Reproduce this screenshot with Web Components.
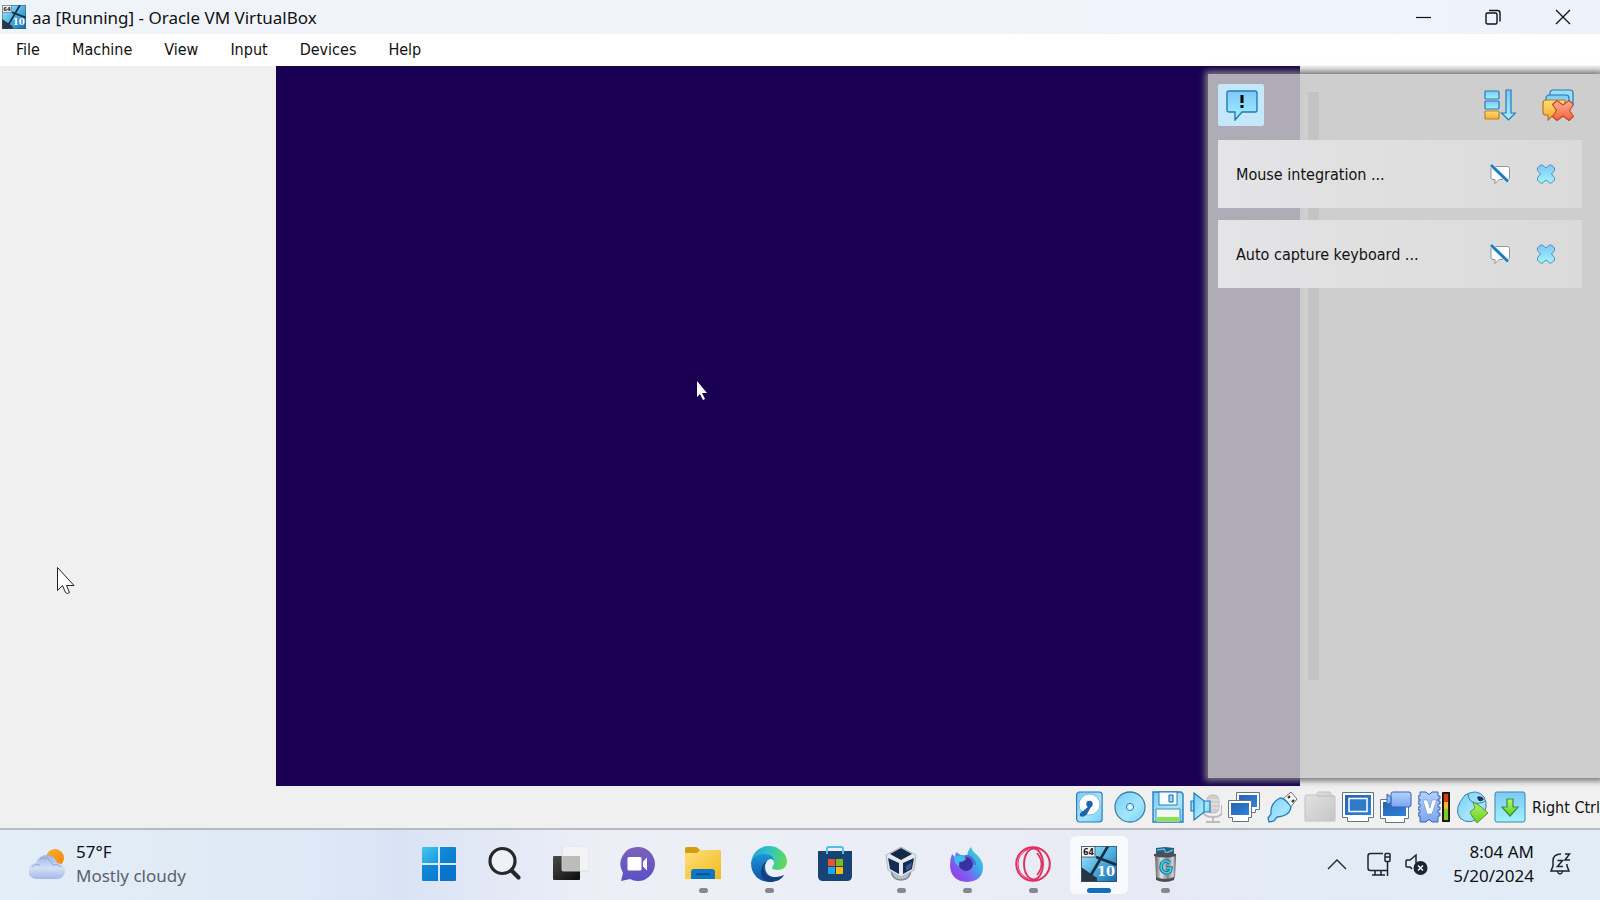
<!DOCTYPE html>
<html lang="en">
<head>
<meta charset="utf-8">
<title>aa [Running] - Oracle VM VirtualBox</title>
<style>
	body {
		margin: 0;
		font-family: "Noto Sans", "Open Sans", sans-serif;
		font-size: 17px;
		color: #111;
		--small-font: 16px "DejaVu Sans Condensed", "DejaVu Sans", sans-serif;
	}
</style>
</head>
<body>
<desktop-screen>
	<vm-window>
		<title-bar slot="title" icon="win10">aa [Running] - Oracle VM VirtualBox</title-bar>
		<menu-bar slot="menu" items="File,Machine,View,Input,Devices,Help"></menu-bar>
		<guest-view slot="view">
			<notification-center>
				<notification-card>Mouse integration ...</notification-card>
				<notification-card>Auto capture keyboard ...</notification-card>
			</notification-center>
		</guest-view>
		<status-bar slot="status">Right Ctrl</status-bar>
	</vm-window>
	<task-bar>
		<weather-widget slot="left" temp="57°F">Mostly cloudy</weather-widget>
		<task-button icon="start" label="Start"></task-button>
		<task-button icon="search" label="Search"></task-button>
		<task-button icon="taskview" label="Task View"></task-button>
		<task-button icon="chat" label="Chat"></task-button>
		<task-button icon="explorer" label="File Explorer" open></task-button>
		<task-button icon="edge" label="Edge" open></task-button>
		<task-button icon="store" label="Store"></task-button>
		<task-button icon="vbox" label="VirtualBox Manager" open></task-button>
		<task-button icon="firefox" label="Firefox" open></task-button>
		<task-button icon="opera" label="Opera" open></task-button>
		<task-button icon="win10" label="aa" open active></task-button>
		<task-button icon="bin" label="Uninstaller" open></task-button>
		<system-tray slot="right" time="8:04 AM" date="5/20/2024"></system-tray>
	</task-bar>
</desktop-screen>

<script>
// gradients shared by every icon, cloned into each shadow root
const defs = `
	<defs>
		<linearGradient id="aqua" x1="0" y1="0" x2="0" y2="1"><stop offset="0" stop-color="#7cc8f8"/><stop offset="1" stop-color="#a2f2fc"/></linearGradient>
		<linearGradient id="pale" x1="0" y1="0" x2="1" y2="1"><stop offset="0" stop-color="#76cdf7"/><stop offset=".6" stop-color="#a6e6fc"/><stop offset="1" stop-color="#6fd0f6"/></linearGradient>
		<linearGradient id="gold" x1="0" y1="0" x2="0" y2="1"><stop offset="0" stop-color="#ffdf72"/><stop offset="1" stop-color="#f9a92c"/></linearGradient>
		<linearGradient id="red" x1="0" y1="0" x2="0" y2="1"><stop offset="0" stop-color="#fbb092"/><stop offset="1" stop-color="#f5603c"/></linearGradient>
		<linearGradient id="screen" x1="0" y1="0" x2="1" y2="1"><stop offset="0" stop-color="#2a62b0"/><stop offset="1" stop-color="#2d82dc"/></linearGradient>
		<linearGradient id="lilac" x1="0" y1="0" x2="0" y2="1"><stop offset="0" stop-color="#b3d3ff"/><stop offset="1" stop-color="#7da4f0"/></linearGradient>
		<linearGradient id="lime" x1="0" y1="0" x2="0" y2="1"><stop offset="0" stop-color="#b6f46c"/><stop offset="1" stop-color="#62cf1e"/></linearGradient>
		<linearGradient id="grey" x1="0" y1="0" x2="1" y2="1"><stop offset="0" stop-color="#e2e2e2"/><stop offset="1" stop-color="#c6c6c6"/></linearGradient>
	</defs>`;

// name: [viewBox size, markup]
const icons = {
	minimize: [16, `<path d="M1 8.5h15" stroke="#111" stroke-width="1.2"/>`],
	restore: [16, `<g fill="none" stroke="#111" stroke-width="1.4"><rect x="1" y="4" width="11" height="11" rx="1.5"/><path d="M4 1.5h8.5a2.5 2.5 0 0 1 2.5 2.5v8.500"/></g>`],
	close: [16, `<path d="M1 1l14 14M15 1L1 15" stroke="#111" stroke-width="1.3"/>`],

	alert: [32, `<path d="M3 2h26a2 2 0 0 1 2 2v17a2 2 0 0 1-2 2H16l-7 8v-8H3a2 2 0 0 1-2-2V4a2 2 0 0 1 2-2z" fill="url(#aqua)" stroke="#2479b8" stroke-width="1.4"/><path d="M14.500 6h3v8h-3zM14.500 16h3v3h-3z" fill="#000"/>`],
	sort: [32, `<g stroke="#2479b8" stroke-width="1.2"><rect x="1" y="2" width="14" height="8" rx="1" fill="url(#aqua)"/><rect x="1" y="12" width="14" height="8" rx="1" fill="url(#aqua)"/><rect x="1" y="22" width="14" height="8" rx="1" fill="url(#gold)" stroke="#b98030"/><path d="M22 1h5v23h4.500l-7 7-7-7H22z" fill="url(#aqua)"/></g>`],
	clear: [32, `<g stroke-width="1.200"><rect x="8" y="1" width="23" height="16" rx="3" fill="#9adef4" stroke="#2479b8"/><rect x="4" y="6" width="23" height="14" rx="3" fill="url(#aqua)" stroke="#2479b8"/><path d="M4 11h19v16H10l-4 4v-5H4q-3 0-3-3v-9q0-3 3-3z" fill="url(#gold)" stroke="#b77325"/><path d="M10.500 15.500l4.500-4 6 4.500 6-4.500 4.500 4-4 6 4 6-4.500 4-6-4.500-6 4.500-4.500-4 4-6z" fill="url(#red)" stroke="#c54828" stroke-linejoin="round"/></g>`],
	mute: [20, `<path d="M2 2.500h15.500q2 0 2 2v9q0 2-2 2H9l-4 4v-4H3q-2 0-2-2V4q0-1.500 1-1.500z" fill="#fdfdfd" stroke="#929292"/><path d="M1 1l17 16.500" stroke="#d4f0ff" stroke-width="4.500"/><path d="M1 1l17 16.500" stroke="#1f7cba" stroke-width="2.800"/>`],
	dismiss: [20, `<path d="M1.500 4L4.500 1h2L10 4l3.500-3h2l3 3v2.500L15.500 10l3 3.500V16l-3 3h-2L10 16l-3.500 3h-2l-3-3v-2.500l3-3.500-3-3.500z" fill="url(#aqua)" stroke="#5590b4" stroke-linejoin="round"/>`],

	disk: [32, `<rect x=".6" y="1" width="25.500" height="30" rx="3" fill="url(#pale)" stroke="#2b7cb8" stroke-width="1.200"/><circle cx="13.500" cy="13.500" r="10.500" fill="#fff" stroke="#6caed0" stroke-width=".8"/><path d="M15 16l-4 7q-3 4-7 2-1-3 3-5l6-5z" fill="#1f63ae"/><circle cx="13.500" cy="13" r="3.200" fill="#1f63ae"/>`],
	disc: [32, `<circle cx="16" cy="16" r="15" fill="url(#pale)" stroke="#3a80a8" stroke-width="1.300"/><circle cx="16" cy="16" r="3.600" fill="#c9f4ff" stroke="#2b7cb8"/><circle cx="16" cy="16" r="1.600" fill="#fff"/>`],
	floppy: [32, `<path d="M1 1h28l2 2v28H1z" fill="url(#pale)" stroke="#2b7cb8" stroke-width="1.400"/><path d="M7 1h18v13H7z" fill="#f7fbff" stroke="#2b7cb8"/><path d="M17 4h4v7h-4z" fill="#96ddfc" stroke="#2060a0"/><path d="M4 18h24v13H4z" fill="#f4f8f4" stroke="#4b8eb8"/><path d="M5 26h22v4H5z" fill="#89e34b"/>`],
	audio: [32, `<g fill="#cfcfcf" stroke="#bcbcbc"><rect x="17" y="4" width="12" height="18" rx="5"/><path d="M13 14v5q0 7 10 7t9-7v-5M23 26v4M16 31h14" fill="none" stroke-width="2"/><path d="M17 9h12M17 13h12M17 17h12" stroke="#e8e8e8"/></g><g fill="url(#pale)" stroke="#2479b8" stroke-width="1.200"><path d="M1 10h3v10H1z"/><path d="M4 2l10 8h6v11h-6L4 29z"/><path d="M14 10v11"/></g>`],
	network: [32, `<path d="M8.500 1.500h23v17h-4v3h-16v-3h-3z" fill="#fff" stroke="#68747c"/><path d="M11 4h18v12H11z" fill="url(#screen)"/><path d="M.5 9.500h23v17h-3v4h-16v-4h-4z" fill="#fff" stroke="#68747c"/><path d="M3 12h18v12H3z" fill="url(#screen)"/>`],
	usb: [32, `<path d="M17 8l8-7 6 7-7 9z" fill="#f7f7f7" stroke="#777"/><path d="M22 7l2-2M26 11l2-2" stroke="#333" stroke-width="2.200"/><path d="M14 7q5 0 11 9-1 9-14 10l-3 4-5 1-1-4 3-4Q4 12 14 7z" fill="url(#pale)" stroke="#2b7cb8" stroke-width="1.300"/>`],
	folder: [32, `<path d="M1 6q0-2 2-2h10V3q0-2 2-2h10q2 0 2 2v2h3q1 0 1 1v24H1z" fill="url(#grey)" stroke="#c2c2c2"/><path d="M13 5h17" stroke="#bbb"/>`],
	display: [32, `<path d="M.500 1.500h31v25h-5v4h-21v-4h-5z" fill="#fff" stroke="#607785"/><path d="M3 4h26v20H3z" fill="url(#screen)"/><path d="M7 7.500h18v13H7z" fill="#2f7ac6" stroke="#fff" stroke-width="1.500"/>`],
	record: [32, `<path d="M.500 8.500h28v19h-4v4h-19v-4h-5z" fill="#fff" stroke="#607785"/><path d="M3 11h23v14H3z" fill="url(#screen)"/><path d="M13 1h16q2 0 2 2v11q0 2-2 2H13q-2 0-2-2V3q0-2 2-2z" fill="url(#lilac)" stroke="#3a64b4"/><path d="M11 6l-4-3v11l4-3z" fill="#92b4f5" stroke="#3a64b4"/>`],
	cpu: [32, `<path d="M4 1h4l2 2h2l2-2h6v4h2v3h-2v2h2v3h-2v3h2v3h-2v3h2v3h-2v6h-6l-2-2h-2l-2 2H2v-6H0v-3h2v-3H0v-3h2v-3H0v-3h2V8H0V5h2V1z" fill="url(#lilac)" stroke="#3a64b4"/><path d="M5 9h4.500l2.500 8 2-8h4.500l-4.500 14h-5z" fill="#fff" stroke="#7189c8" stroke-width=".6"/><path d="M24.500 1.500h7v29h-7z" fill="#3c170c" stroke="#111"/><path d="M26 3h4v9h-4z" fill="#d83c18"/><path d="M26 11h4v8h-4z" fill="#f1b832"/><path d="M26 18h4v11h-4z" fill="#74cf26"/>`],
	mouse: [32, `<path d="M9 4Q21-3 28 6q6 11-4 20-11 9-20 1-7-9 5-23z" fill="url(#pale)" stroke="#397eae"/><path d="M12 3q0 7 7 9 8 1 11-3" fill="none" stroke="#397eae"/><path d="M21 6q4-2 7 2-3 4-6 1z" fill="#123a58"/><path d="M17 11l7 4 8 7-11 10-5-7-2-4 5-4z" fill="url(#lime)" stroke="#579825"/>`],
	hostkey: [32, `<rect x="1" y="1" width="30" height="30" rx="2" fill="url(#aqua)" stroke="#3787ae"/><path d="M13 8h6v8h5l-8 9-8-9h5z" fill="url(#lime)" stroke="#37903a" stroke-width="1.200"/>`],

	weather: [36, `<defs><linearGradient id="cloud" x1="0" y1="0" x2="0" y2="1"><stop offset="0" stop-color="#9db2e6"/><stop offset=".55" stop-color="#d3e1f5"/><stop offset="1" stop-color="#a8b5e6"/></linearGradient><linearGradient id="sun" x1="0" y1="0" x2="1" y2="1"><stop offset="0" stop-color="#ffae26"/><stop offset="1" stop-color="#f28310"/></linearGradient></defs><circle cx="26" cy="12" r="9" fill="url(#sun)"/><path d="M8 33a8 8 0 0 1-1-16q3-8 11-8 8 0 10 8a8 8 0 0 1 0 16z" fill="url(#cloud)"/><path d="M3 21q3-4 8-2M11 13q8-4 13 6 4-2 8 2" fill="none" stroke="#93a6dc" stroke-width="1"/>`],
	start: [36, `<defs><linearGradient id="w" x1="0" y1="0" x2="1" y2="1"><stop offset="0" stop-color="#4ac2ee"/><stop offset="1" stop-color="#139bdd"/></linearGradient><linearGradient id="w2" x1="0" y1="0" x2="1" y2="1"><stop offset="0" stop-color="#1597dc"/><stop offset="1" stop-color="#0670c8"/></linearGradient></defs><path d="M1 2q0-1 1-1h15v16H1z" fill="url(#w)"/><path d="M19 1h15q1 0 1 1v15H19zM1 19h16v16H2q-1 0-1-1z" fill="url(#w2)"/><path d="M19 19h16v15q0 1-1 1H19z" fill="#0874ca"/>`],
	search: [36, `<circle cx="15.500" cy="15" r="12.500" fill="#eef1f6" stroke="#25272b" stroke-width="3.200"/><path d="M24.500 24.500l7 7" stroke="#25272b" stroke-width="4.200" stroke-linecap="round"/>`],
	taskview: [36, `<defs><linearGradient id="t" x1="0" y1="0" x2="1" y2="1"><stop offset="0" stop-color="#4a4a4a"/><stop offset="1" stop-color="#0b0b0b"/></linearGradient></defs><rect x="0" y="10" width="27" height="24" rx="1" fill="url(#t)"/><rect x="9" y="0" width="27" height="25" rx="1" fill="#f5f5f5" opacity=".8" stroke="#ddd"/><path d="M10 10h17v14H10z" fill="#bcbcba"/>`],
	chat: [36, `<defs><linearGradient id="c" x1="0" y1="0" x2="0" y2="1"><stop offset="0" stop-color="#7b62b8"/><stop offset="1" stop-color="#5951c6"/></linearGradient></defs><path d="M18 1a17 17 0 1 1-7 32L2 35l2-8A17 17 0 0 1 18 1z" fill="url(#c)"/><rect x="8.500" y="11" width="14" height="13.500" rx="1.500" fill="#fff"/><path d="M24 15.500l4-4v13l-4-4z" fill="#fff"/>`],
	explorer: [36, `<defs><linearGradient id="f" x1="0" y1="0" x2="1" y2="1"><stop offset="0" stop-color="#ffe07a"/><stop offset="1" stop-color="#f3b91c"/></linearGradient></defs><path d="M0 3q0-2 2-2h8q2 0 3 1l2 2v6H0z" fill="#d49c10"/><path d="M0 7h12l3-3h20q1 0 1 1v28H0z" fill="url(#f)"/><path d="M6 33v-7q0-3 3-3h18q3 0 3 3v7z" fill="#1175c6"/><path d="M11 27.500h14v1.500H11z" fill="#0a4a86"/>`],
	edge: [36, `<defs><linearGradient id="e1" x1="0" y1=".3" x2="1" y2=".5"><stop offset="0" stop-color="#22a4da"/><stop offset=".5" stop-color="#33c6bd"/><stop offset="1" stop-color="#62da58"/></linearGradient><linearGradient id="e2" x1="0" y1="0" x2="0" y2="1"><stop offset="0" stop-color="#1b96da"/><stop offset="1" stop-color="#0c53a2"/></linearGradient></defs><path d="M0 17C1 7 8 0 18 0s18 8 18 15c0 6-4 9-10 9-5 0-6-2-4-4 3-5-1-8-6-8C8 12 2 13 0 17z" fill="url(#e1)"/><path d="M0 17c2-7 8-9 14-9 5 0 9 3 9 7-2-3-5-2-7 0-4 5-2 17 10 16 3 0 5-1 7-2-3 5-9 7-15 7C8 36 0 28 0 17z" fill="url(#e2)"/><path d="M16 15c-6 7-2 18 9 16 4 0 6-1 8-2-3 5-9 7-14 7-11-1-12-16-3-21z" fill="#153f84"/>`],
	store: [36, `<path d="M1 5h34v25q0 5-5 5H6q-5 0-5-5z" fill="#174377"/><path d="M10 8V3q0-2 2-2h12q2 0 2 2v5" fill="none" stroke="#4fc0e2" stroke-width="2"/><path d="M11 13h7v7h-7z" fill="#ef5128"/><path d="M19 13h7v7h-7z" fill="#80b91f"/><path d="M11 21h7v7h-7z" fill="#21a4e8"/><path d="M19 21h7v7h-7z" fill="#ffba08"/>`],
	vbox: [36, `<path d="M8 24q1 10 10 10t10-10" fill="#b9c0cb" stroke="#7e8998" stroke-width="1.500"/><path d="M18 1l15 8-2 15-13 7L5 24 3 9z" fill="#e4e8ef" stroke="#aeb6c2"/><path d="M18 2l11 6-11 6L7 8z" fill="#132846"/><path d="M5 12l11 5v11l-9-5zM31 12l-11 5v11l9-5z" fill="#132c55"/><path d="M23 20l6-4-1 6-5 3z" fill="#38598d"/>`],
	firefox: [36, `<defs><linearGradient id="ff" x1="1" y1="0" x2="0" y2="1"><stop offset="0" stop-color="#50e3a8"/><stop offset=".35" stop-color="#38aff0"/><stop offset=".65" stop-color="#7f5cf2"/><stop offset="1" stop-color="#9a35dc"/></linearGradient></defs><path d="M3 8q1 1 3 3L7 6q3 2 5 3 4 0 6 1Q19 4 22 1q1 4 5 7 7 6 7 13 0 14-16 15Q2 35 1 20 1 13 3 8z" fill="url(#ff)"/><circle cx="17" cy="18" r="7" fill="#3b309e"/><path d="M5 11q7-3 12 1-1 4-7 4 1 3-1 4-4-3-4-9z" fill="#3dbced"/><path d="M16 10q9 0 10 9" fill="none" stroke="#5a5fe0" stroke-width="2"/>`],
	opera: [36, `<g fill="none" stroke="#e02e5e"><circle cx="18" cy="18" r="16.800" stroke-width="2"/><ellipse cx="18.500" cy="18" rx="9.500" ry="15.500" stroke-width="1.800"/><path d="M13 3Q3 8 3 18t10 15" stroke-width="1"/><path d="M22 7q9 11 0 22" stroke-width="1.600"/></g>`],
	win10: [36, `<defs><linearGradient id="wt" x1="0" y1="0" x2="1" y2="1"><stop offset="0" stop-color="#b5ecfb"/><stop offset=".45" stop-color="#58b9e3"/><stop offset="1" stop-color="#1166ad"/></linearGradient></defs><path d="M0 0h36v36H0z" fill="url(#wt)"/><path d="M0 21l16 11v4H0z" fill="#283544"/><path d="M15 11l21 8M27 0L10 29" stroke="#182c42" stroke-width="2.600"/><path d="M0 0h14v11H0z" fill="#f4f6f6" stroke="#445" stroke-width=".8"/><text x="2" y="9" font-family="DejaVu Sans" font-weight="bold" font-size="8" fill="#222">64</text><text x="16" y="30" font-family="DejaVu Serif" font-weight="bold" font-size="13" fill="#fff">10</text><path d="M.500 .500h35v35H.500z" fill="none" stroke="#31506d" stroke-width=".8"/>`],
	bin: [36, `<defs><linearGradient id="b" x1="0" x2="1"><stop offset="0" stop-color="#5d6063"/><stop offset=".3" stop-color="#e1e3e4"/><stop offset=".6" stop-color="#858889"/><stop offset=".85" stop-color="#d5d7d7"/><stop offset="1" stop-color="#505355"/></linearGradient></defs><path d="M9 2l9-1 9 1v8H9z" fill="#295c78"/><path d="M10 4l7-1 2 4 7-3" fill="none" stroke="#58bbdf" stroke-width="1.500"/><path d="M8 9h21l-1 23q-10 6-19 0z" fill="url(#b)"/><path d="M7 8q11-2 22 0v2q-11 3-22 0zM9 31q10 4 18 0v3q-9 4-18 0z" fill="#4d5052"/><path d="M23 17q-5-4-8 0-3 8 4 10 5 0 5-5h-5" fill="none" stroke="#147b9c" stroke-width="3.600"/><path d="M23 17q-5-4-8 0-3 8 4 10 5 0 5-5h-5" fill="none" stroke="#46d2ed" stroke-width="1.600"/>`],

	chevron: [24, `<path d="M3 17l9-9 9 9" fill="none" stroke="#1b2530" stroke-width="1.400"/>`],
	monitor: [24, `<g fill="none" stroke="#1b2530" stroke-width="1.500"><path d="M16 1.500H3.500Q1 1.500 1 4v12q0 2.500 2.500 2.500H20M8 19v4M14 19v4M5 23h13"/><rect x="18" y="1.500" width="5" height="8" rx="1"/><path d="M18 5h5M20.500 9.500V24"/></g>`],
	muted: [24, `<path d="M11 11V3L5 8H2q-1 0-1 1v5q0 1 1 1h3l2 2" fill="none" stroke="#1b2530" stroke-width="1.500"/><circle cx="15.500" cy="16" r="7" fill="#1b2530"/><path d="M13 13.500l5 5M18 13.500l-5 5" stroke="#fff" stroke-width="1.400"/>`],
	snooze: [24, `<g fill="none" stroke="#1b2530" stroke-width="1.500"><path d="M13 2Q5 2 5 9v5l-2 5h18l-2-5v-2M9 19q3 6 6 0"/><path d="M9.500 8.500h5l-5 6h5.500M17 2h4.500L17 8h5"/></g>`]
};

class VmIcon extends HTMLElement {
	constructor() {
		super();
		this.attachShadow({ mode: 'open' });
	}
	connectedCallback() {
		const [box, shape] = icons[this.getAttribute('name')];
		const size = this.getAttribute('size') || 32;
		this.shadowRoot.innerHTML = `
			<style>
				:host { display: block; flex: none; }
				svg { display: block; }
			</style>
			<svg width="${size}" height="${size}" viewBox="0 0 ${box} ${box}" aria-hidden="true">${defs}${shape}</svg>
		`;
	}
}

class DesktopScreen extends HTMLElement {
	constructor() {
		super();
		this.attachShadow({ mode: 'open' }).innerHTML = `
			<style>
				:host { display: flex; flex-direction: column; min-height: 100vh; overflow: hidden; }
				::slotted(vm-window) { flex: 1; }
			</style>
			<slot></slot>
		`;
	}
}

class VmWindow extends HTMLElement {
	constructor() {
		super();
		this.attachShadow({ mode: 'open' }).innerHTML = `
			<style>
				:host { display: flex; flex-direction: column; background: #f0f0f0; }
				::slotted(guest-view) { flex: 1; }
			</style>
			<slot name="title"></slot>
			<slot name="menu"></slot>
			<slot name="view"></slot>
			<slot name="status"></slot>
		`;
	}
}

class TitleBar extends HTMLElement {
	constructor() {
		super();
		this.attachShadow({ mode: 'open' });
	}
	connectedCallback() {
		this.shadowRoot.innerHTML = `
			<style>
				:host {
					display: flex;
					align-items: center;
					gap: 6px;
					height: 34px;
					padding: 0 2px;
					background: linear-gradient(90deg, #eff4f9, #f1f4fb 50%, #eef2fa);
				}
				.name { flex: 1; }
				.buttons { display: flex; align-self: stretch; }
				button {
					display: grid;
					place-items: center;
					width: 70px;
					border: 0;
					padding: 0;
					background: none;
				}
				button:hover { background: #dfe4ec; }
			</style>
			<vm-icon name="${this.getAttribute('icon')}" size="24"></vm-icon>
			<span class="name"><slot></slot></span>
			<div class="buttons">
				<button aria-label="Minimize"><vm-icon name="minimize" size="16"></vm-icon></button>
				<button aria-label="Restore"><vm-icon name="restore" size="16"></vm-icon></button>
				<button aria-label="Close"><vm-icon name="close" size="16"></vm-icon></button>
			</div>
		`;
	}
}

class MenuBar extends HTMLElement {
	constructor() {
		super();
		this.attachShadow({ mode: 'open' });
	}
	connectedCallback() {
		const items = this.getAttribute('items').split(',');
		this.shadowRoot.innerHTML = `
			<style>
				:host { display: flex; height: 32px; background: #fff; }
				button {
					border: 0;
					padding: 0 16px 2px;
					background: none;
					font: var(--small-font);
					color: inherit;
				}
				button:hover { background: #e5f3ff; }
			</style>
			${items.map(item => `<button>${item}</button>`).join('')}
		`;
	}
}

class GuestView extends HTMLElement {
	constructor() {
		super();
		this.attachShadow({ mode: 'open' }).innerHTML = `
			<style>
				:host {
					display: grid;
					grid-template-columns: 276fr 1024fr 300fr;
					position: relative;
				}
				.screen { grid-column: 2; background: #190053; }
				svg { position: absolute; }
				/* both pointers float over the screen */
				.host-pointer { left: 56px; top: 500px; }
				.guest-pointer { left: 696px; top: 314px; }
				::slotted(notification-center) {
					position: absolute;
					top: 8px;
					right: 0;
					bottom: 8px;
					width: 392px;
				}
			</style>
			<div class="screen"></div>
			<svg class="host-pointer" width="20" height="30" viewBox="0 0 20 30"><path d="M1.500 1.500v23l5-5 3 7q2 2 4 0l-3-7h7.500z" fill="#fff" stroke="#222"/></svg>
			<svg class="guest-pointer" width="12" height="20" viewBox="0 0 12 20"><path d="M1 1v16l3-3 3 6 2-1-3-6h5z" fill="#fff"/></svg>
			<slot></slot>
		`;
	}
}

class NotificationCenter extends HTMLElement {
	constructor() {
		super();
		this.attachShadow({ mode: 'open' }).innerHTML = `
			<style>
				:host {
					display: flex;
					flex-direction: column;
					gap: 12px;
					box-sizing: border-box;
					padding: 10px 18px 10px 10px;
					background: rgba(200, 200, 200, .86);
					box-shadow: 0 0 6px 3px #777;
				}
				header {
					display: flex;
					align-items: center;
					gap: 26px;
					padding-right: 8px;
					margin-bottom: 2px;
				}
				button { border: 0; padding: 0; background: none; }
				.toggle {
					margin-right: auto;
					padding: 5px 6px 5px 8px;
					border-radius: 2px;
					background: #c5e7fa;
				}
				/* ghost of the collapsed scroll bar */
				.scroll {
					position: absolute;
					left: 100px;
					top: 18px;
					bottom: 98px;
					width: 11px;
					background: #c4c4c4;
				}
				header, ::slotted(*) { position: relative; }
			</style>
			<div class="scroll"></div>
			<header>
				<button class="toggle" aria-label="Toggle notifications"><vm-icon name="alert"></vm-icon></button>
				<button aria-label="Sort order"><vm-icon name="sort"></vm-icon></button>
				<button aria-label="Dismiss all"><vm-icon name="clear"></vm-icon></button>
			</header>
			<slot></slot>
		`;
	}
}

class NotificationCard extends HTMLElement {
	constructor() {
		super();
		this.attachShadow({ mode: 'open' }).innerHTML = `
			<style>
				:host {
					display: flex;
					align-items: center;
					gap: 26px;
					box-sizing: border-box;
					height: 68px;
					padding: 0 26px 0 18px;
					background: linear-gradient(90deg, #e4e3e6, #dfdfdf 50%, #dadada);
					font: var(--small-font);
				}
				.message { flex: 1; }
				button { border: 0; padding: 0; background: none; }
			</style>
			<span class="message"><slot></slot></span>
			<button aria-label="Do not show again"><vm-icon name="mute" size="20"></vm-icon></button>
			<button aria-label="Dismiss"><vm-icon name="dismiss" size="20"></vm-icon></button>
		`;
	}
}

class StatusBar extends HTMLElement {
	constructor() {
		super();
		const names = ['disk', 'disc', 'floppy', 'audio', 'network', 'usb', 'folder', 'display', 'record', 'cpu', 'mouse', 'hostkey'];
		this.attachShadow({ mode: 'open' }).innerHTML = `
			<style>
				:host {
					display: flex;
					justify-content: flex-end;
					align-items: center;
					gap: 6px;
					height: 42px;
					font: var(--small-font);
				}
				button { border: 0; padding: 0; background: none; }
			</style>
			${names.map(name => `<button aria-label="${name}"><vm-icon name="${name}"></vm-icon></button>`).join('')}
			<span><slot></slot></span>
		`;
	}
}

class TaskBar extends HTMLElement {
	constructor() {
		super();
		this.attachShadow({ mode: 'open' }).innerHTML = `
			<style>
				:host {
					display: grid;
					grid-template-columns: 1fr auto 1fr;
					align-items: center;
					box-sizing: border-box;
					height: 72px;
					border-top: 2px solid #b5bac3;
					background: linear-gradient(90deg, #e3eef6, #dfe9f6 18%, #dae3f5 25%, #edeff6 38%, #eceef7 55%, #e7e9f4 72%, #e3ebf5 80%, #e1ecf7);
				}
				nav { display: flex; gap: 8px; padding-left: 4px; }
				::slotted([slot="right"]) { justify-self: end; }
			</style>
			<slot name="left"></slot>
			<nav><slot></slot></nav>
			<slot name="right"></slot>
		`;
	}
}

class TaskButton extends HTMLElement {
	constructor() {
		super();
		this.attachShadow({ mode: 'open' });
	}
	connectedCallback() {
		this.shadowRoot.innerHTML = `
			<style>
				:host { display: block; }
				button {
					display: flex;
					flex-direction: column;
					align-items: center;
					gap: 6px;
					width: 58px;
					height: 58px;
					border: 0;
					border-radius: 6px;
					padding: 10px 0 0;
					background: none;
				}
				.mark { width: 9px; height: 5px; border-radius: 3px; }
				:host([open]) .mark { background: #85888e; }
				:host([active]) button { background: #f8fafe; }
				:host([active]) .mark { width: 24px; background: #116fbe; }
			</style>
			<button aria-label="${this.getAttribute('label')}">
				<vm-icon name="${this.getAttribute('icon')}" size="36"></vm-icon>
				<span class="mark"></span>
			</button>
		`;
	}
}

class WeatherWidget extends HTMLElement {
	constructor() {
		super();
		this.attachShadow({ mode: 'open' });
	}
	connectedCallback() {
		this.shadowRoot.innerHTML = `
			<style>
				:host {
					display: flex;
					align-items: center;
					gap: 11px;
					padding: 0 0 2px 29px;
					line-height: 24px;
				}
				.sky { color: #59626d; }
			</style>
			<vm-icon name="weather" size="36"></vm-icon>
			<div>
				<div>${this.getAttribute('temp')}</div>
				<div class="sky"><slot></slot></div>
			</div>
		`;
	}
}

class SystemTray extends HTMLElement {
	constructor() {
		super();
		this.attachShadow({ mode: 'open' });
	}
	connectedCallback() {
		this.shadowRoot.innerHTML = `
			<style>
				:host {
					display: flex;
					align-items: center;
					gap: 14px;
					padding: 0 28px 2px 0;
					line-height: 24px;
				}
				button { border: 0; padding: 0; background: none; }
				.hidden { margin-right: 4px; }
				.clock { margin-left: 10px; text-align: right; font: inherit; color: inherit; }
				.clock span { display: block; }
			</style>
			<button class="hidden" aria-label="Show hidden icons"><vm-icon name="chevron" size="24"></vm-icon></button>
			<button aria-label="Network"><vm-icon name="monitor" size="24"></vm-icon></button>
			<button aria-label="Volume"><vm-icon name="muted" size="24"></vm-icon></button>
			<button class="clock"><span>${this.getAttribute('time')}</span><span>${this.getAttribute('date')}</span></button>
			<button aria-label="Notifications"><vm-icon name="snooze" size="24"></vm-icon></button>
		`;
	}
}

customElements.define('vm-icon', VmIcon);
customElements.define('desktop-screen', DesktopScreen);
customElements.define('vm-window', VmWindow);
customElements.define('title-bar', TitleBar);
customElements.define('menu-bar', MenuBar);
customElements.define('guest-view', GuestView);
customElements.define('notification-center', NotificationCenter);
customElements.define('notification-card', NotificationCard);
customElements.define('status-bar', StatusBar);
customElements.define('task-bar', TaskBar);
customElements.define('task-button', TaskButton);
customElements.define('weather-widget', WeatherWidget);
customElements.define('system-tray', SystemTray);
</script>
</body>
</html>
